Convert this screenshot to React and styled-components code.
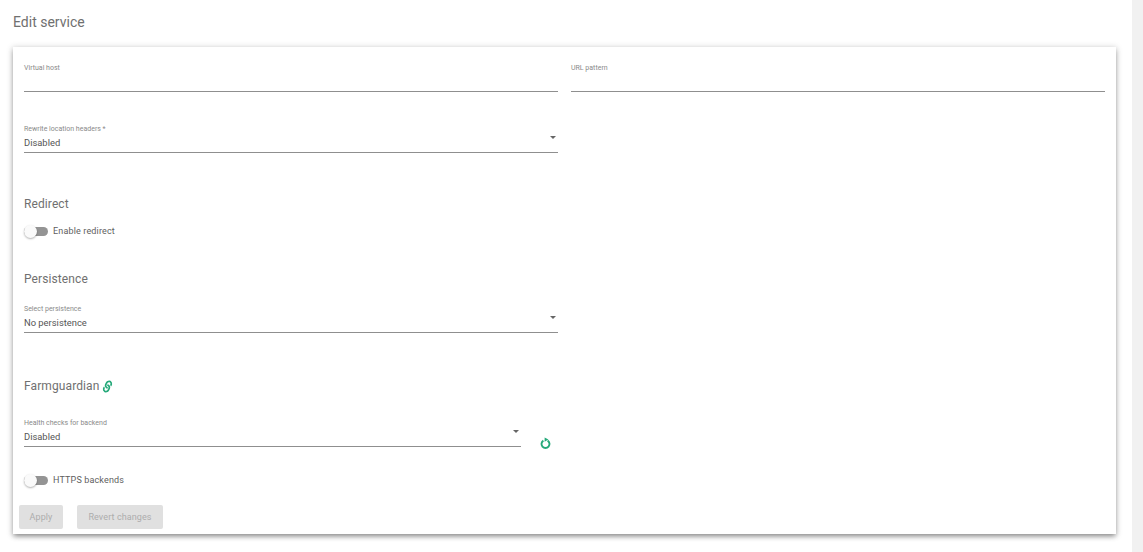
import React from 'react'
import styled, { createGlobalStyle } from 'styled-components'
import { FaLink } from 'react-icons/fa'

const GlobalStyle = createGlobalStyle`
  html, body {
    margin: 0;
    height: 552px;
    overflow: hidden;
    background: #fff;
    font-family: Roboto, "Liberation Sans", sans-serif;
  }
`

const Page = styled.div`
  display: flex;
  height: 552px;
`

const Main = styled.main`
  flex: 1;
  min-width: 0;
  padding: 14px 16px 0 13px;
`

const Scrollbar = styled.div`
  width: 11px;
  background: #f1f1f1;
`

const Title = styled.h1`
  margin: 0 0 16px;
  height: 17px;
  font-size: 14px;
  line-height: 17px;
  font-weight: 400;
  color: #707070;
`

const Card = styled.form`
  height: 487px;
  box-sizing: border-box;
  padding: 15px 11px 0;
  background: #fff;
  box-shadow: 0 3px 5px -1px rgba(0, 0, 0, 0.38), 0 1px 6px 1px rgba(0, 0, 0, 0.16);
`

const Row = styled.div`
  display: grid;
  grid-template-columns: 534px 534px;
  column-gap: 13px;
  margin-bottom: ${({ $after }) => $after || 0}px;
`

const Field = styled.div`
  position: relative;
  width: ${({ $width }) => ($width ? `${$width}px` : 'auto')};
  height: ${({ $tall }) => ($tall ? 28 : 29)}px;
  border-bottom: 1px solid #8f8f8f;
`

const FieldLabel = styled.label`
  display: block;
  padding-top: ${({ $tall }) => ($tall ? 1 : 2)}px;
  font-size: 7px;
  line-height: 9px;
  color: #8a8a8a;
`

const FieldValue = styled.div`
  margin-top: 3px;
  font-size: 9.4px;
  line-height: 11px;
  color: #555;
`

const Caret = styled.span`
  position: absolute;
  right: 2px;
  top: 12px;
  width: 0;
  height: 0;
  border-left: 3.5px solid transparent;
  border-right: 3.5px solid transparent;
  border-top: 3.5px solid #666;
`

const Section = styled.h2`
  display: flex;
  align-items: center;
  gap: 3px;
  margin: ${({ $top }) => $top}px 0 ${({ $bottom }) => $bottom}px;
  height: 16px;
  font-size: 12px;
  line-height: 16px;
  font-weight: 400;
  letter-spacing: 0.1px;
  color: #707070;
`

const LinkIcon = styled(FaLink)`
  width: 11px;
  height: 11px;
  margin-top: 1px;
  transform: rotate(-18deg);
  color: #26a97a;
`

const ToggleRow = styled.div`
  display: flex;
  align-items: center;
  gap: 5px;
  height: 14px;
  margin-bottom: ${({ $after }) => $after}px;
`

const Toggle = styled.span`
  position: relative;
  display: block;
  width: 24px;
  height: 9px;
  border-radius: 5px;
  background: #949494;

  &::after {
    content: '';
    position: absolute;
    left: 0;
    top: -2px;
    width: 13px;
    height: 13px;
    border-radius: 50%;
    background: #fafafa;
    box-shadow: 0 1px 2px rgba(0, 0, 0, 0.3);
  }
`

const ToggleText = styled.span`
  font-size: 9px;
  line-height: 14px;
  letter-spacing: 0.15px;
  color: #606060;
`

const HealthRow = styled.div`
  display: flex;
  align-items: flex-end;
  gap: 19px;
  margin-bottom: 26px;
`

const RefreshSvg = styled.svg`
  width: 11px;
  height: 12px;
  margin-bottom: -2px;
  color: #26a97a;
`

const RefreshIcon = () => (
  <RefreshSvg viewBox="0 0 11 12" fill="none" aria-hidden="true">
    <path d="M3.4 3.6a4 4 0 1 0 4.2 0" stroke="currentColor" strokeWidth="1.9" />
    <path d="M4.6 0.4 8.4 2.6 4.6 4.8Z" fill="currentColor" />
  </RefreshSvg>
)

const Actions = styled.div`
  display: flex;
  gap: 14px;
  margin-left: -5px;
`

const Button = styled.button`
  width: ${({ $width }) => $width}px;
  height: 24px;
  padding: 0;
  border: 0;
  border-radius: 2px;
  background: #e0e0e0;
  font-family: inherit;
  font-size: 9px;
  letter-spacing: 0.1px;
  color: #adadad;
`

const SelectField = ({ label, value, width }) => (
  <Field $tall $width={width}>
    <FieldLabel $tall>{label}</FieldLabel>
    <FieldValue>{value}</FieldValue>
    <Caret />
  </Field>
)

const App = () => {
  return (
    <Page>
      <GlobalStyle />
      <Main>
        <Title>Edit service</Title>
        <Card>
          <Row $after={32}>
            <Field>
              <FieldLabel>Virtual host</FieldLabel>
            </Field>
            <Field>
              <FieldLabel>URL pattern</FieldLabel>
            </Field>
          </Row>
          <Row>
            <SelectField label="Rewrite location headers *" value="Disabled" />
          </Row>

          <Section $top={43} $bottom={12}>Redirect</Section>
          <ToggleRow $after={33}>
            <Toggle />
            <ToggleText>Enable redirect</ToggleText>
          </ToggleRow>

          <Section $top={0} $bottom={17}>Persistence</Section>
          <Row>
            <SelectField label="Select persistence" value="No persistence" />
          </Row>

          <Section $top={45} $bottom={24}>
            Farmguardian
            <LinkIcon />
          </Section>
          <HealthRow>
            <SelectField width={497} label="Health checks for backend" value="Disabled" />
            <RefreshIcon />
          </HealthRow>

          <ToggleRow $after={18}>
            <Toggle />
            <ToggleText>HTTPS backends</ToggleText>
          </ToggleRow>

          <Actions>
            <Button type="button" disabled $width={44}>Apply</Button>
            <Button type="button" disabled $width={86}>Revert changes</Button>
          </Actions>
        </Card>
      </Main>
      <Scrollbar />
    </Page>
  )
}

export default App
